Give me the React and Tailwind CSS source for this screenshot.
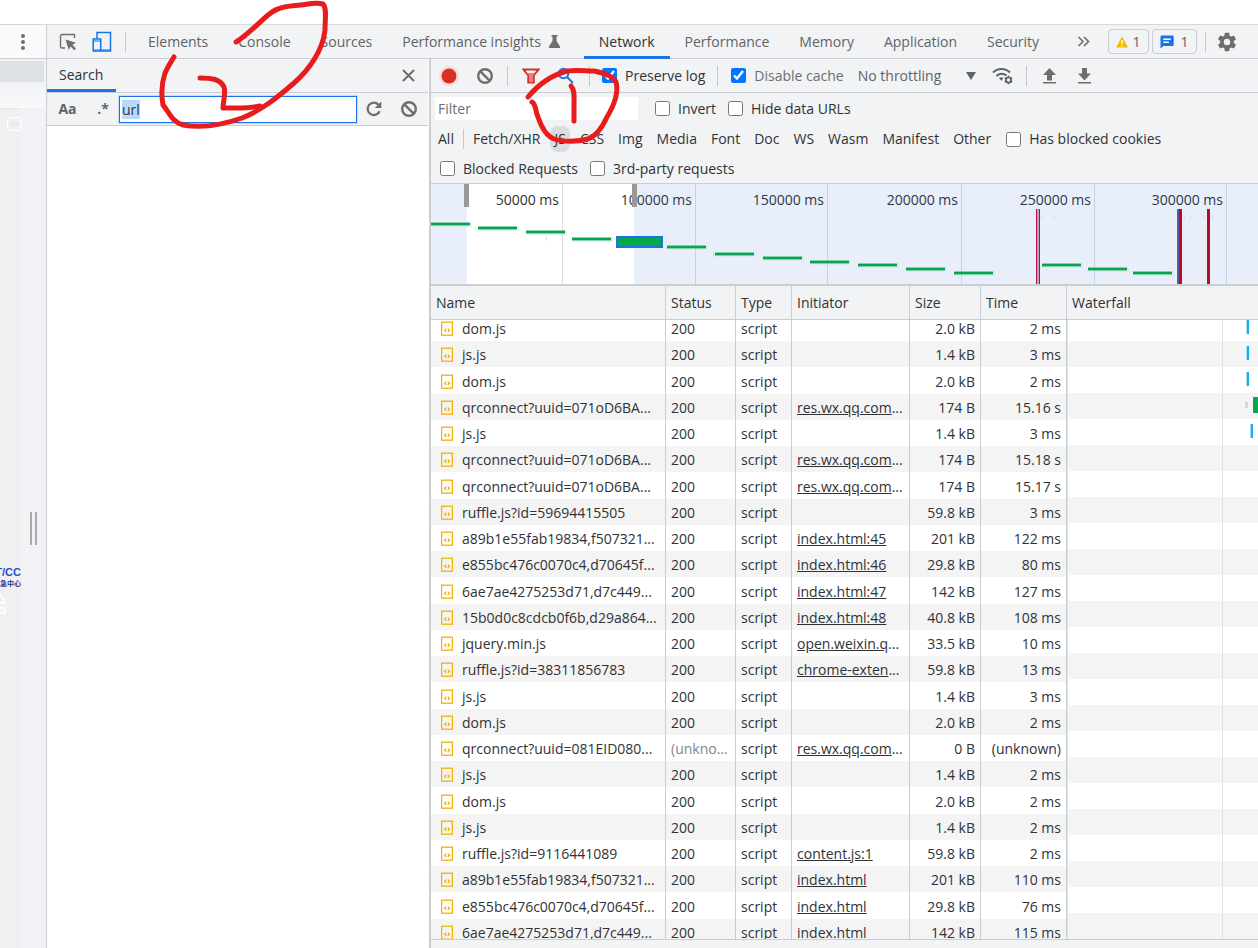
import { useEffect, useRef } from "react";

const requests = [
  { name: "dom.js", size: "2.0 kB", time: "2 ms" },
  { name: "js.js", size: "1.4 kB", time: "3 ms" },
  { name: "dom.js", size: "2.0 kB", time: "2 ms" },
  { name: "qrconnect?uuid=071oD6BA...", initiator: "res.wx.qq.com", more: true, size: "174 B", time: "15.16 s" },
  { name: "js.js", size: "1.4 kB", time: "3 ms" },
  { name: "qrconnect?uuid=071oD6BA...", initiator: "res.wx.qq.com", more: true, size: "174 B", time: "15.18 s" },
  { name: "qrconnect?uuid=071oD6BA...", initiator: "res.wx.qq.com", more: true, size: "174 B", time: "15.17 s" },
  { name: "ruffle.js?id=59694415505", size: "59.8 kB", time: "3 ms" },
  { name: "a89b1e55fab19834,f507321...", initiator: "index.html:45", size: "201 kB", time: "122 ms" },
  { name: "e855bc476c0070c4,d70645f...", initiator: "index.html:46", size: "29.8 kB", time: "80 ms" },
  { name: "6ae7ae4275253d71,d7c449...", initiator: "index.html:47", size: "142 kB", time: "127 ms" },
  { name: "15b0d0c8cdcb0f6b,d29a864...", initiator: "index.html:48", size: "40.8 kB", time: "108 ms" },
  { name: "jquery.min.js", initiator: "open.weixin.q", more: true, size: "33.5 kB", time: "10 ms" },
  { name: "ruffle.js?id=38311856783", initiator: "chrome-exten", more: true, size: "59.8 kB", time: "13 ms" },
  { name: "js.js", size: "1.4 kB", time: "3 ms" },
  { name: "dom.js", size: "2.0 kB", time: "2 ms" },
  { name: "qrconnect?uuid=081EID080...", status: "(unkno...", initiator: "res.wx.qq.com", more: true, size: "0 B", time: "(unknown)" },
  { name: "js.js", size: "1.4 kB", time: "2 ms" },
  { name: "dom.js", size: "2.0 kB", time: "2 ms" },
  { name: "js.js", size: "1.4 kB", time: "2 ms" },
  { name: "ruffle.js?id=9116441089", initiator: "content.js:1", size: "59.8 kB", time: "2 ms" },
  { name: "a89b1e55fab19834,f507321...", initiator: "index.html", size: "201 kB", time: "110 ms" },
  { name: "e855bc476c0070c4,d70645f...", initiator: "index.html", size: "29.8 kB", time: "76 ms" },
  { name: "6ae7ae4275253d71,d7c449...", initiator: "index.html", size: "142 kB", time: "115 ms" },
];

const columns = [
  { label: "Name", width: "w-[235px]" },
  { label: "Status", width: "w-[70px]" },
  { label: "Type", width: "w-[56px]" },
  { label: "Initiator", width: "w-[118px]" },
  { label: "Size", width: "w-[71px]" },
  { label: "Time", width: "w-[86px]" },
];

const types = ["Fetch/XHR", "JS", "CSS", "Img", "Media", "Font", "Doc", "WS", "Wasm", "Manifest", "Other"];

// x and y of each request bar in the overview
const overviewBars = [
  [0, 39], [47, 43], [95, 47], [141, 54], [236, 62], [284, 69], [332, 73], [379, 77],
  [427, 80], [475, 84], [523, 88], [611, 80], [657, 84], [702, 88],
];

const ticks = [
  [131, "50000 ms"], [264, "100000 ms"], [396, "150000 ms"],
  [530, "200000 ms"], [663, "250000 ms"], [795, "300000 ms"],
];

const ClearIcon = () => (
  <svg width="18" height="18" viewBox="0 0 18 18" fill="none" stroke="#6e6e6e" strokeWidth="2.4">
    <circle cx="9" cy="9" r="6.8" />
    <path d="M4.3 4.3l9.4 9.4" />
  </svg>
);

const Divider = () => <span className="h-5 w-px shrink-0 bg-[#c4c7cc]" />;

const Check = ({ label, checked, muted }) => (
  <label className="flex shrink-0 items-center gap-2 whitespace-nowrap">
    <input type="checkbox" defaultChecked={checked} className="size-[15px] shrink-0" />
    <span className={muted ? "text-[#6b6f73]" : ""}>{label}</span>
  </label>
);

const Tab = ({ children, active }) => (
  <button
    type="button"
    className={`flex h-[34px] shrink-0 items-center gap-2 border-b-3 px-[15px] pt-[3px] whitespace-nowrap ${
      active ? "border-[#1a73e8] text-[#303236]" : "border-transparent text-[#5f6368]"
    }`}
  >
    {children}
  </button>
);

const TabBar = () => (
  <header className="flex h-[34px] shrink-0 items-center border-b border-[#cacdd1]">
    <button type="button" aria-label="Inspect element" className="ml-3 shrink-0">
      <svg width="18" height="18" viewBox="0 0 18 18">
        <path d="M6 15H3a1.5 1.5 0 0 1-1.500-1.500V3A1.500 1.500 0 0 1 3 1.500h12.500V5" fill="none" stroke="#6e6e6e" strokeWidth="1.400" />
        <path d="M6.500 6.500l10.500 3.300-3.600 2 3.600 3.700-1.700 1.700-3.700-3.700-1.800 3.500z" fill="#6e6e6e" />
      </svg>
    </button>
    <button type="button" aria-label="Toggle device toolbar" className="ml-[15px] shrink-0">
      <svg width="20" height="22" viewBox="0 0 20 22" fill="none" stroke="#1a73e8" strokeWidth="1.500">
        <path d="M5 7.500V1.500h13.500v18.500H9" />
        <rect x="1.200" y="8" width="7.500" height="12" fill="#f1f3f4" />
        <path d="M1.200 10h7.500M1.200 19h17.300" strokeWidth="1.200" />
      </svg>
    </button>
    <span className="ml-[13px] flex"><Divider /></span>
    <nav className="ml-[7px] flex min-w-0 flex-1">
      <Tab>Elements</Tab>
      <Tab>Console</Tab>
      <Tab>Sources</Tab>
      <Tab>
        Performance insights
        <svg width="11" height="13" viewBox="0 0 11 13" fill="#6e6e6e">
          <path d="M2.500 0h6v1.500h-1V6L11 11.500V13H0v-1.500L3.500 6V1.500h-1z" />
        </svg>
      </Tab>
      <span className="ml-[9px] flex">
        <Tab active>Network</Tab>
      </span>
      <Tab>Performance</Tab>
      <Tab>Memory</Tab>
      <Tab>Application</Tab>
      <Tab>Security</Tab>
    </nav>
    <div className="flex shrink-0 items-center">
      <button type="button" aria-label="More tabs" className="mr-[18px]">
        <svg width="13" height="11" viewBox="0 0 13 11" fill="none" stroke="#6e6e6e" strokeWidth="1.600">
          <path d="M1.500 1L6 5.500 1.500 10M7 1l4.500 4.500L7 10" />
        </svg>
      </button>
      <button type="button" className="mr-[3px] flex h-[25px] w-[41px] items-center justify-center gap-1 rounded-sm border border-[#cacdd1] text-[#5f6368]">
        <svg width="12" height="12" viewBox="0 0 12 12">
          <path d="M6 .500L12 11.500H0z" fill="#f5b907" />
          <path d="M6 4v4M6 9v1.400" stroke="#fff" strokeWidth="1.300" />
        </svg>
        1
      </button>
      <button type="button" className="flex h-[25px] w-[45px] items-center justify-center gap-1.5 rounded-sm border border-[#cacdd1] text-[#5f6368]">
        <svg width="14" height="14" viewBox="0 0 14 14">
          <path d="M1.500.500h11A1.200 1.200 0 0 1 13.700 1.700v8a1.200 1.200 0 0 1-1.200 1.200H3.500L.500 13.500V1.700A1.200 1.200 0 0 1 1.500.500z" fill="#1a73e8" />
          <path d="M3.300 4.300h7.500M3.300 7.300h5.500" stroke="#fff" strokeWidth="1.400" />
        </svg>
        1
      </button>
      <span className="mx-2 flex"><Divider /></span>
      <button type="button" aria-label="Settings" className="mr-5 ml-[2px]">
        <svg width="22" height="22" viewBox="0 0 24 24" fill="#6e6e6e">
          <path d="M19.430 12.980c.040-.320.070-.640.070-.980s-.030-.660-.070-.980l2.110-1.650c.190-.150.240-.420.120-.640l-2-3.460c-.120-.220-.390-.300-.610-.220l-2.490 1c-.520-.400-1.080-.730-1.690-.980l-.380-2.650C14.460 2.180 14.250 2 14 2h-4c-.250 0-.460.180-.490.420l-.380 2.650c-.610.250-1.170.590-1.690.980l-2.490-1c-.230-.090-.490 0-.610.220l-2 3.460c-.130.220-.070.490.120.640l2.110 1.650c-.040.320-.070.650-.070.980s.030.660.070.980l-2.110 1.650c-.190.150-.240.420-.120.640l2 3.460c.120.220.390.300.610.220l2.490-1c.520.400 1.080.730 1.690.980l.380 2.650c.030.240.240.420.490.420h4c.250 0 .460-.180.490-.420l.380-2.650c.610-.250 1.170-.590 1.690-.980l2.490 1c.230.090.490 0 .610-.220l2-3.460c.120-.220.070-.490-.120-.640zM12 15.500a3.500 3.500 0 1 1 0-7 3.500 3.500 0 0 1 0 7z" />
        </svg>
      </button>
    </div>
  </header>
);

const SearchPane = () => {
  const inputRef = useRef(null);

  useEffect(() => {
    inputRef.current.focus();
    inputRef.current.select();
  }, []);

  return (
    <section className="flex w-[381px] shrink-0 flex-col bg-white">
      <div className="flex h-[34px] shrink-0 items-end justify-between border-b border-[#cacdd1] bg-[#f1f3f4]">
        <h2 className="h-[34px] w-[69px] border-b-3 border-[#1a73e8] pl-3 leading-[34px]">Search</h2>
        <button type="button" aria-label="Close search" className="mr-[13px] mb-2.5">
          <svg width="13" height="13" viewBox="0 0 13 13" stroke="#6e6e6e" strokeWidth="2">
            <path d="M1 1l11 11M12 1L1 12" />
          </svg>
        </button>
      </div>
      <div className="flex h-[33px] shrink-0 items-center border-b border-[#cacdd1] bg-[#f1f3f4] text-[#5f6368]">
        <button type="button" className="ml-[11px] w-[19px] font-bold">Aa</button>
        <button type="button" className="ml-5 w-3 font-bold">.*</button>
        <input
          ref={inputRef}
          aria-label="Search text"
          defaultValue="url"
          className="mr-2 ml-2.5 h-[27px] min-w-0 flex-1 border border-[#1a73e8] bg-white px-0.5 text-[#303942] ring-1 ring-[#c5dbf8] outline-none selection:bg-[#b8dafc] selection:text-[#303942]"
        />
        <button type="button" aria-label="Refresh">
          <svg width="18" height="18" viewBox="0 0 18 18">
            <path d="M14.600 11.200A6.200 6.200 0 1 1 13.500 4.700" fill="none" stroke="#6e6e6e" strokeWidth="2.300" />
            <path d="M16.300 1.500v6.500H9.800z" fill="#6e6e6e" />
          </svg>
        </button>
        <button type="button" aria-label="Clear" className="mr-2.5 ml-[17px]">
          <ClearIcon />
        </button>
      </div>
    </section>
  );
};

const Toolbar = () => (
  <div className="flex h-[34px] shrink-0 items-center border-b border-[#cacdd1]">
    <button type="button" aria-label="Record" className="ml-[7px]">
      <svg width="22" height="22" viewBox="0 0 22 22">
        <circle cx="11" cy="11" r="10" fill="#f6cfcd" opacity=".6" />
        <circle cx="11" cy="11" r="7.500" fill="#d93025" />
      </svg>
    </button>
    <button type="button" aria-label="Clear" className="mr-[13px] ml-4">
      <ClearIcon />
    </button>
    <Divider />
    <button type="button" aria-label="Filter" className="ml-3.5">
      <svg width="18" height="16" viewBox="0 0 18 16">
        <path d="M1.500 1.500h15l-4.800 6v7H6.300v-7z" fill="none" stroke="#d93025" strokeWidth="2" />
        <path d="M5 5h8l-2 2.500v6H7v-6z" fill="#e8827b" />
      </svg>
    </button>
    <button type="button" aria-label="Search" className="mr-[15px] ml-[17px]">
      <svg width="17" height="17" viewBox="0 0 17 17" fill="none" stroke="#1a73e8" strokeWidth="2">
        <circle cx="6.500" cy="6.500" r="4.800" />
        <path d="M10 10l6 6" />
      </svg>
    </button>
    <Divider />
    <span className="mr-3 ml-3 flex"><Check label="Preserve log" checked /></span>
    <Divider />
    <span className="mr-3.5 ml-[13px] flex"><Check label="Disable cache" checked muted /></span>
    <div className="relative w-[118px] shrink-0">
      <select aria-label="Throttling" className="w-full appearance-none bg-transparent text-[#5f6368] outline-none">
        <option>No throttling</option>
      </select>
      <svg className="pointer-events-none absolute top-1.5 right-0" width="10" height="8" fill="#5f6368">
        <path d="M0 0h10L5 8z" />
      </svg>
    </div>
    <button type="button" aria-label="Network conditions" className="mr-3 ml-4">
      <svg width="22" height="18" viewBox="0 0 22 18" fill="none" stroke="#5f6368">
        <path d="M1 5.500a12 12 0 0 1 17 0" strokeWidth="2" />
        <path d="M4.500 9a7 7 0 0 1 10-.500" strokeWidth="2" />
        <path d="M7 11.300a3.500 3.500 0 0 1 4.500-.300L9.300 13.700z" fill="#5f6368" stroke="none" />
        <circle cx="16.500" cy="13" r="2.600" strokeWidth="1.800" />
        <path d="M16.500 8.800v1.500M16.500 15.700v1.500M12.800 10.900l1.400.800M18.800 14.300l1.400.800M12.800 15.100l1.400-.800M18.800 11.700l1.400-.800" strokeWidth="1.600" />
      </svg>
    </button>
    <Divider />
    <button type="button" aria-label="Import HAR" className="ml-4">
      <svg width="13" height="16" viewBox="0 0 13 16" fill="#6e6e6e">
        <path d="M6.500 0L13 7H9v5.500H4V7H0zM0 14h13v1.600H0z" />
      </svg>
    </button>
    <button type="button" aria-label="Export HAR" className="ml-[22px]">
      <svg width="13" height="16" viewBox="0 0 13 16" fill="#6e6e6e">
        <path d="M4 0h5v5.500h4L6.500 12.500 0 5.500h4zM0 14h13v1.600H0z" />
      </svg>
    </button>
  </div>
);

const Filters = () => (
  <div className="flex h-[91px] shrink-0 flex-col border-b border-[#cacdd1]">
    <div className="flex h-[31px] items-center gap-3 pl-1">
      <input aria-label="Filter" placeholder="Filter" className="mr-[5px] h-[23px] w-[203px] bg-white px-[3px] outline-none placeholder:text-[#6b6f73]" />
      <Check label="Invert" />
      <Check label="Hide data URLs" />
    </div>
    <div className="flex h-[30px] items-center gap-[5px] pl-[3px]">
      <button type="button" className="px-1">All</button>
      <Divider />
      <div className="flex shrink-0 items-center gap-1.5">
        {types.map((type) => (
          <button
            key={type}
            type="button"
            className={`h-[26px] px-1 ${type === "JS" ? "rounded-lg bg-[#dadce0]" : ""}`}
          >
            {type}
          </button>
        ))}
      </div>
      <span className="ml-1.5 flex"><Check label="Has blocked cookies" /></span>
    </div>
    <div className="flex h-[29px] items-center gap-3 pl-[9px]">
      <Check label="Blocked Requests" />
      <Check label="3rd-party requests" />
    </div>
  </div>
);

const Overview = () => (
  <svg className="block h-[100px] w-full shrink-0 bg-white" role="img" aria-label="Request overview">
    {ticks.map(([x, label]) => (
      <g key={label}>
        <rect x={x} y="0" width="1" height="100" fill="#dcdee1" />
        <text x={x - 3} y="21" textAnchor="end" fontSize="14" fill="#303236">{label}</text>
      </g>
    ))}
    <rect x="0" y="0" width="36" height="100" fill="#1a66d6" opacity=".1" />
    <rect x="203" y="0" width="100%" height="100" fill="#1a66d6" opacity=".1" />
    {overviewBars.map(([x, y]) => (
      <g key={x}>
        <rect x={x} y={y - 1} width="41" height="5" fill="#c9e8e0" opacity=".5" />
        <rect x={x} y={y} width="39" height="2" fill="#07a351" />
        <rect x={x} y={y - 1} width="39" height="4" fill="#07a351" opacity=".4" />
      </g>
    ))}
    <path d="M115.500 53v4M282.500 68v4" stroke="#c5e3ee" />
    <rect x="186" y="53" width="45" height="10" fill="#07a84c" stroke="#1a73e8" strokeWidth="2" />
    <rect x="605" y="25" width="4" height="75" fill="#b9a0c8" />
    <path d="M605.500 25v75M608.500 25v75" stroke="#b3163a" />
    <rect x="746" y="25" width="2" height="75" fill="#5b5aa8" />
    <rect x="748" y="25" width="3" height="75" fill="#b90d1e" />
    <rect x="776" y="25" width="3" height="75" fill="#b90d1e" />
    <path d="M610.500 31v4M623.500 31v4M753.500 31v4M759.500 31v4M773.500 31v4M781.500 31v4" stroke="#d8dde6" />
    <rect x="33" y="0" width="5" height="23" fill="#999" />
    <rect x="201" y="0" width="5" height="23" fill="#999" />
  </svg>
);

const ScriptIcon = () => (
  <svg className="shrink-0" width="12" height="16" viewBox="0 0 12 16" fill="none" stroke="#f2b203">
    <rect x=".600" y="1.200" width="10.800" height="13" strokeWidth="1.300" />
    <path d="M5.200 7.600L3.600 9.200l1.600 1.600M6.800 7.600l1.600 1.600-1.600 1.600" strokeWidth="1.300" />
  </svg>
);

const RequestTable = () => (
  <table className="w-[636px] shrink-0 table-fixed border-separate border-spacing-0 self-start text-left">
    <thead className="sticky top-0 z-10">
      <tr className="h-[34px] bg-[#f1f3f4]">
        {columns.map(({ label, width }) => (
          <th key={label} scope="col" className={`${width} border-r border-b border-[#cacdd1] px-[5px] font-normal`}>
            {label}
          </th>
        ))}
      </tr>
    </thead>
    <tbody>
      {requests.map((request, i) => (
        <tr
          key={i}
          className="h-[26px] even:bg-[#f4f4f4] [&:nth-child(4n+3)]:h-[27px] [&>td]:border-r [&>td]:border-[#cacdd1] [&>td]:px-[5px] [&>td]:pt-0.5 [&>td]:whitespace-nowrap"
        >
          <td>
            <div className="flex items-center gap-[9px] pl-[5px]">
              <ScriptIcon />
              <span>{request.name}</span>
            </div>
          </td>
          <td className={request.status ? "text-[#80868b]" : ""}>{request.status || "200"}</td>
          <td>script</td>
          <td>
            {request.initiator && <a href="#" className="underline">{request.initiator}</a>}
            {request.more && "..."}
          </td>
          <td className="text-right">{request.size}</td>
          <td className="text-right">{request.time}</td>
        </tr>
      ))}
    </tbody>
  </table>
);

const Waterfall = () => (
  <div className="min-w-0 flex-1">
    <div className="sticky top-0 z-10 flex h-[34px] items-center border-b border-[#cacdd1] bg-[#f1f3f4] pl-[5px]">
      Waterfall
    </div>
    <div className="relative">
      {[...requests, {}].map((_, i) => (
        <div key={i} className="h-[26px] even:bg-[#f4f4f4]" />
      ))}
      <svg className="absolute inset-0 h-full w-full">
        <rect x="0" y="0" width="1" height="100%" fill="#e2e2e6" />
        <rect x="155" y="0" width="1" height="100%" fill="#e4e4e6" />
        {[[179, 5], [179, 31], [179, 57], [183, 109]].map(([x, y]) => (
          <g key={y}>
            <rect x={x} y={y} width="3" height="14" fill="#a8dff8" />
            <rect x={x + 1} y={y} width="2" height="14" fill="#17aaf2" />
          </g>
        ))}
        <rect x="178" y="87" width="3" height="6" fill="#d6d6d6" />
        <rect x="186" y="82" width="5" height="16" fill="#07a84c" />
      </svg>
    </div>
  </div>
);

const NetworkPane = () => {
  const gridRef = useRef(null);

  useEffect(() => {
    gridRef.current.scrollTop = 5;
  }, []);

  return (
    <section className="ml-px flex min-w-0 flex-1 flex-col border-l-2 border-[#cacdd1] bg-[#f1f3f4]">
      <Toolbar />
      <Filters />
      <Overview />
      <div ref={gridRef} className="flex min-h-0 flex-1 overflow-hidden border-t-2 border-[#cacdd1] bg-white">
        <RequestTable />
        <Waterfall />
      </div>
      <footer className="h-[9px] shrink-0 border-t border-[#cacdd1]" />
    </section>
  );
};

const PageEdge = () => (
  <aside className="relative flex w-[46px] shrink-0 flex-col overflow-hidden bg-[#f0f2f5]">
    <div className="flex h-[34px] shrink-0 items-center justify-center border-b border-[#cacdd1] bg-[#f9faf9]">
      <button type="button" aria-label="More options">
        <svg width="4" height="16" viewBox="0 0 4 16" fill="#6e6e6e">
          <circle cx="2" cy="2" r="2" />
          <circle cx="2" cy="8" r="2" />
          <circle cx="2" cy="14" r="2" />
        </svg>
      </button>
    </div>
    <div className="mt-0.5 mr-0.5 h-[21px] shrink-0 bg-[#dee1e6]" />
    <div className="h-[26px] shrink-0 bg-linear-to-b from-[#f2f3f5] to-[#f8f9f9]" />
    <div className="flex min-h-0 flex-1">
      <div className="flex w-[21px] flex-col items-end border-t border-[#e6e7e8] bg-[#f0f0f0]">
        <span className="mt-2 h-[14px] w-[14px] shrink-0 rounded-xs border border-white text-center text-[5px] leading-3 text-[#dddddd]">APP</span>
        <strong className="mt-[433px] font-['Liberation_Sans'] text-[11px] leading-4 text-[#2350c8]">T/CC</strong>
        <span className="font-['Noto_Sans_CJK_SC',sans-serif] text-[7px] leading-[7px] font-bold whitespace-nowrap text-[#1c2fa0]">急中心</span>
        <svg className="mt-1.5 self-start" width="7" height="22" fill="none" stroke="#fff" strokeWidth="1.500">
          <path d="M0 1l5 9H0M0 15h5v5H0" />
        </svg>
      </div>
      <div className="flex flex-1 justify-center gap-[3px] pt-[404px]">
        <span className="h-[33px] w-0.5 bg-[#a9a9a9]" />
        <span className="h-[33px] w-0.5 bg-[#a9a9a9]" />
      </div>
    </div>
  </aside>
);

// Freehand marks over the panels
const Marks = () => (
  <svg
    className="pointer-events-none absolute top-0 left-0 z-20"
    width="640"
    height="160"
    fill="none"
    stroke="#e81c1c"
    strokeWidth="5"
    strokeLinecap="round"
    strokeLinejoin="round"
  >
    <path d="M236 42C243 38 250 31 257 25C266 17 271 11 278 9C285 6 293 6 301 5C309 4 316 2 323 4C327 8 325 20 325 30C323 50 309 70 294 83C278 97 262 110 242 118C222 125 200 128 183 125C172 122 169 112 163 105C161 94 162 82 165 73C168 66 171 62 174 57" />
    <path d="M200 78C212 78 220 79 224 87C226 93 223 102 223 108C236 108 248 109 260 106" />
    <path d="M528 97C538 85 552 75 567 71C576 70 585 71 594 71C604 73 613 76 616 82C619 93 613 107 607 117C602 128 596 136 588 139C578 142 563 142 554 139C546 136 541 126 538 117C535 110 536 104 532 102" />
    <path d="M571 86C575 90 574 98 574 106V121" />
  </svg>
);

export default function App() {
  return (
    <div className="relative flex h-screen flex-col overflow-hidden bg-white pt-6 font-['Open_Sans','Noto_Sans',sans-serif] text-sm leading-5 text-[#303236]">
      <div className="flex min-h-0 flex-1 border-t border-[#d5d7da]">
        <PageEdge />
        <main className="flex min-w-0 flex-1 flex-col border-l border-[#cacdd1] bg-[#f1f3f4]">
          <TabBar />
          <div className="flex min-h-0 flex-1 bg-white">
            <SearchPane />
            <NetworkPane />
          </div>
        </main>
      </div>
      <Marks />
    </div>
  );
}
